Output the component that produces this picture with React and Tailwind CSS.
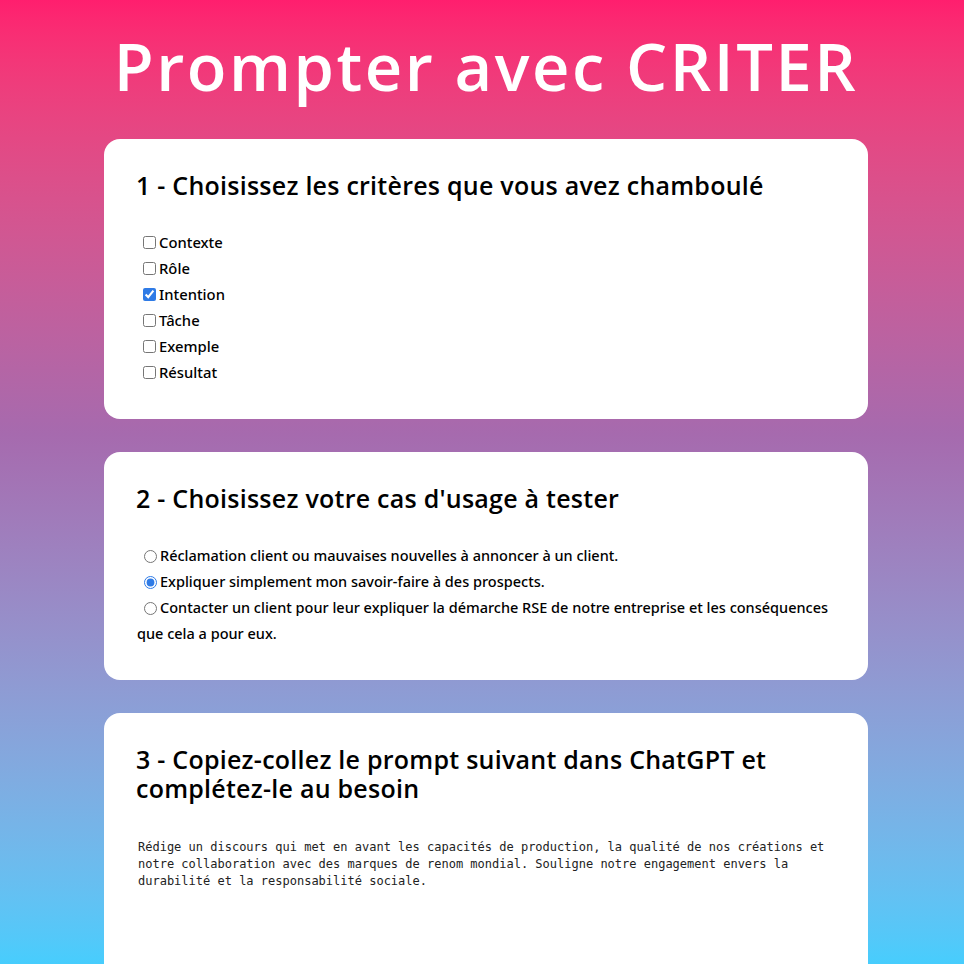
import { useState } from "react";

const criteres = ["Contexte", "Rôle", "Intention", "Tâche", "Exemple", "Résultat"];

const usages = [
  "Réclamation client ou mauvaises nouvelles à annoncer à un client.",
  "Expliquer simplement mon savoir-faire à des prospects.",
  "Contacter un client pour leur expliquer la démarche RSE de notre entreprise et les conséquences que cela a pour eux.",
];

const prompt =
  "Rédige un discours qui met en avant les capacités de production, la qualité de nos créations et notre collaboration avec des marques de renom mondial. Souligne notre engagement envers la durabilité et la responsabilité sociale.";

function Card({ title, children }) {
  return (
    <section className="bg-white rounded-2xl px-8 pt-8 pb-[34px]">
      <h2 className="font-['Open_Sans',sans-serif] font-semibold text-[25px] leading-[29px] tracking-[0.25px] text-black mb-[29px]">
        {title}
      </h2>
      {children}
    </section>
  );
}

export default function App() {
  const [checked, setChecked] = useState(["Intention"]);
  const [usage, setUsage] = useState(1);

  const toggle = (c) =>
    setChecked((prev) => (prev.includes(c) ? prev.filter((x) => x !== c) : [...prev, c]));

  return (
    <div className="h-screen overflow-hidden bg-gradient-to-b from-[#ff1e6e] via-[#a66aae] via-45% to-[#47cdfd] pl-2">
      <h1 className="text-center text-white font-['Open_Sans',sans-serif] font-semibold text-[65px] tracking-[2.5px] leading-[80px] pt-[26px] pb-[33px]">
        Prompter avec CRITER
      </h1>

      <div className="w-[764px] mx-auto flex flex-col gap-[33px]">
        <Card title="1 - Choisissez les critères que vous avez chamboulé">
          <div className="flex flex-col pl-[7px]">
            {criteres.map((c) => (
              <label
                key={c}
                className="flex items-center gap-[3px] h-[26px] font-['Noto_Sans',sans-serif] font-medium text-[14.8px] text-black"
              >
                <input
                  type="checkbox"
                  className="w-[13px] h-[13px] m-0 accent-[#2f7be6]"
                  checked={checked.includes(c)}
                  onChange={() => toggle(c)}
                />
                {c}
              </label>
            ))}
          </div>
        </Card>

        <Card title="2 - Choisissez votre cas d'usage à tester">
          <div className="font-['Noto_Sans',sans-serif] font-medium text-[14.5px] leading-[26px] text-black pl-px">
            {usages.map((u, i) => (
              <label key={i} className="block">
                <input
                  type="radio"
                  name="usage"
                  className="w-[13px] h-[13px] my-0 ml-[7px] mr-[3px] align-[-2px] accent-[#2f7be6]"
                  checked={usage === i}
                  onChange={() => setUsage(i)}
                />
                {u}
              </label>
            ))}
          </div>
        </Card>

        <Card title="3 - Copiez-collez le prompt suivant dans ChatGPT et complétez-le au besoin">
          <p className="font-['DejaVu_Sans_Mono',monospace] text-[12px] leading-[17px] text-[#222] whitespace-pre-wrap pl-[2px] pt-[7px] h-[160px]">
            {prompt}
          </p>
        </Card>
      </div>
    </div>
  );
}
